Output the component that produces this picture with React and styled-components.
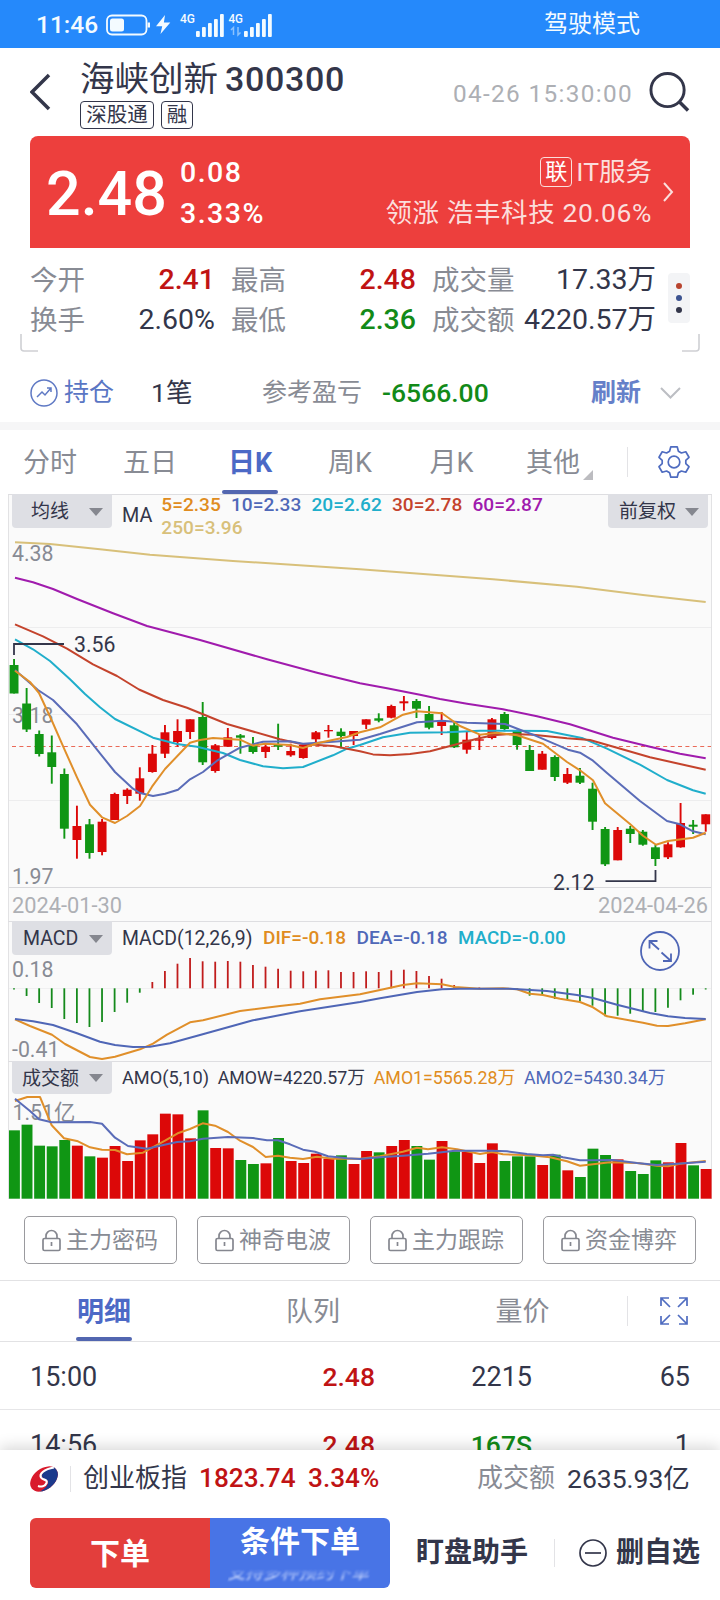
import React from "react";
import styled, { createGlobalStyle } from "styled-components";

const ink = "#33364a";
const muted = "#888b94";
const up = "#c01314";
const down = "#128a18";
const brand = "#4f68b8";
const amber = "#e08c20";
const cyan = "#20aecb";

const Global = createGlobalStyle`
  *, *::before, *::after { box-sizing: border-box; }
  body { margin: 0; background: #fff; }
  svg { display: block; }
  svg text { font-family: Roboto, "Noto Sans CJK SC", sans-serif; }
`;

const Screen = styled.div`
  width: 720px;
  height: 1600px;
  overflow: hidden;
  display: flex;
  flex-direction: column;
  background: #fff;
  color: ${ink};
  font-family: Roboto, "Noto Sans CJK SC", sans-serif;
  white-space: nowrap;
`;

const Text = styled.span`
  display: block;
  font-size: ${(p) => p.$size || 27}px;
  line-height: 1.2;
  font-weight: ${(p) => p.$weight || 400};
  color: ${(p) => p.$color || "inherit"};
  letter-spacing: ${(p) => p.$track || 0}px;
  text-align: ${(p) => p.$align || "left"};
`;

const StatusBar = styled.header`
  flex: none;
  height: 48px;
  display: grid;
  grid-template-columns: 69px 73px 366px auto;
  align-items: center;
  padding: 1px 0 0 36px;
  background: #2589fb;
  color: #f4fbff;
`;

const Header = styled.div`
  flex: none;
  height: 88px;
  display: grid;
  grid-template-columns: 50px 1fr 196px 41px;
  padding: 0 30px;
`;
const Centered = styled.div`
  display: flex;
  align-items: center;
  padding-top: ${(p) => p.$top || 0}px;
`;
const Title = styled.div`
  display: flex;
  align-items: center;
  gap: 7px;
  height: 41px;
  margin-top: 11px;
`;
const Tags = styled.div`
  display: flex;
  gap: 7px;
  margin-top: 1px;
`;
const Tag = styled.span`
  display: flex;
  align-items: center;
  justify-content: center;
  width: ${(p) => p.$w}px;
  height: 28px;
  border: 1px solid ${ink};
  border-radius: 4px;
  font-size: 20.5px;
  line-height: 1;
`;

const QuoteCard = styled.section`
  flex: none;
  height: 112px;
  margin: 0 30px;
  padding: 0 16px 0;
  border-radius: 8px 8px 0 0;
  background: #ed3f3d;
  color: #fff;
  display: grid;
  grid-template-columns: 134px 1fr auto 22px;
  align-items: center;
`;
const Price = styled(Text)`
  padding-top: 5px;
`;
const QuoteLines = styled.div`
  display: grid;
  grid-template-rows: 41px 41px;
  align-items: center;
  justify-items: ${(p) => p.$align || "start"};
  padding-top: ${(p) => p.$top}px;
`;
const Sector = styled.div`
  display: flex;
  align-items: center;
  gap: 4px;
  color: #fbdedc;
`;
const SectorTag = styled.span`
  display: flex;
  align-items: center;
  justify-content: center;
  width: 32px;
  height: 30px;
  border: 1px solid #fbdedc;
  border-radius: 4px;
  color: #fff;
  font-size: 22px;
  line-height: 1;
`;

const Stats = styled.section`
  flex: none;
  height: 103px;
  padding: 12px 30px 0;
  display: flex;
`;
const StatGrid = styled.div`
  width: 626px;
  height: 80px;
  display: grid;
  grid-template-columns: 58px 127px 16px 58px 127px 16px 84px 140px;
  grid-template-rows: 40px 40px;
  align-items: center;
`;
const StatName = styled(Text)`
  color: ${muted};
  font-size: 27.5px;
`;
const StatValue = styled(Text)`
  text-align: right;
  font-size: 28.5px;
`;
const MoreDots = styled.div`
  width: 22px;
  height: 50px;
  margin: 13px 0 0 12px;
  border-radius: 4px;
  background: #f3f4f6;
  display: flex;
  flex-direction: column;
  align-items: center;
  justify-content: center;
  gap: 6px;
`;
const Dot = styled.i`
  width: 6px;
  height: 6px;
  border-radius: 50%;
  background: ${(p) => p.$c};
`;

const BracketRow = styled.div`
  flex: none;
  height: 18px;
  margin: -17px 20px 0;
`;

const Holding = styled.section`
  flex: none;
  height: 70px;
  display: grid;
  grid-template-columns: 34px 87px 111px 120px 209px 69px 21px;
  padding: 11px 0 0 30px;
  align-items: center;
`;
const Band = styled.div`
  flex: none;
  height: 8px;
  background: #f6f6f7;
`;

const Tabs = styled.nav`
  flex: none;
  height: 64px;
  display: flex;
`;
const Tab = styled.div`
  width: ${(p) => p.$w}px;
  display: flex;
  flex-direction: column;
  align-items: center;
  justify-content: space-between;
  padding-top: ${(p) => p.$top}px;
  font-size: 27px;
  line-height: 32px;
  font-weight: ${(p) => (p.$on ? 700 : 400)};
  color: ${(p) => (p.$on ? "#4c69c6" : muted)};
  &::after {
    content: "";
    width: 56px;
    height: 4px;
    border-radius: 2px;
    background: ${(p) => (p.$on ? "#5266b0" : "transparent")};
  }
`;
const TabTail = styled.div`
  flex: 1;
  display: flex;
  align-items: center;
`;
const MoreCorner = styled.i`
  flex: none;
  margin: 26px 0 0 -20px;
  border: 5px solid transparent;
  border-right-color: #bcbcc0;
  border-bottom-color: #bcbcc0;
`;
const Rule = styled.i`
  flex: none;
  width: 1px;
  height: ${(p) => p.$h}px;
  background: #e3e3e6;
  margin: ${(p) => p.$m || 0};
`;

const Pane = styled.section`
  flex: none;
  height: ${(p) => p.$h}px;
  display: grid;
  align-items: start;
  > * { grid-area: 1 / 1; }
`;
const PaneHead = styled.div`
  display: flex;
  padding: 0 12px;
  height: ${(p) => p.$h || 34}px;
`;
const Picker = styled.div`
  flex: none;
  width: 100px;
  height: 100%;
  display: flex;
  align-items: center;
  justify-content: space-between;
  padding: 1px 9px 0 ${(p) => p.$pad}px;
  border-radius: 0 0 4px 4px;
  background: #dedfe4;
  font-size: ${(p) => p.$size || 19}px;
  line-height: 1;
`;
const Caret = styled.i`
  border: 7px solid transparent;
  border-top: 8px solid #85878f;
  border-bottom: 0;
`;
const Legend = styled.div`
  flex: 1;
  display: flex;
  column-gap: ${(p) => p.$gap}px;
  padding: ${(p) => p.$pad};
`;
const MaName = styled(Text)`
  padding-top: 10px;
`;
const MaValues = styled.div`
  flex: 1;
  display: flex;
  flex-wrap: wrap;
  align-content: flex-start;
  column-gap: 10.2px;
`;

const Tools = styled.div`
  flex: none;
  height: 81px;
  display: flex;
  gap: 20px;
  padding: 17px 24px 0;
`;
const Tool = styled.div`
  width: 153px;
  height: 48px;
  border: 1px solid #9a9a9e;
  border-radius: 5px;
  display: flex;
  align-items: center;
  gap: 5px;
  padding: 1px 0 0 17px;
  color: ${muted};
`;
const DetailTabs = styled(Tabs)`
  height: 62px;
  border-top: 1px solid #e2e2e4;
  border-bottom: 1px solid #e2e2e4;
`;
const Trades = styled.section`
  flex: none;
  height: 108px;
  overflow: hidden;
`;
const Trade = styled.div`
  height: 68px;
  display: grid;
  grid-template-columns: 150px 195px 157px 158px;
  align-items: center;
  padding: 3px 30px 0;
  border-bottom: 1px solid #e6e6e8;
`;

const Footer = styled.footer`
  flex: none;
  height: 150px;
  background: #fff;
  box-shadow: 0 -3px 14px rgba(0, 0, 0, 0.16);
  position: relative;
`;
const IndexRow = styled.div`
  height: 56px;
  display: grid;
  grid-template-columns: 40px 13px 116px 109px 169px 90px auto;
  align-items: center;
  padding: 1px 0 0 30px;
`;
const Actions = styled.div`
  display: grid;
  grid-template-columns: 180px 180px 26px 112px 27px 24px 37px auto;
  align-items: center;
  padding: 12px 0 0 30px;
  height: 82px;
`;
const Action = styled.div`
  height: 70px;
  display: flex;
  flex-direction: column;
  align-items: center;
  justify-content: ${(p) => (p.$blue ? "flex-start" : "center")};
  padding-top: ${(p) => (p.$blue ? 6 : 2)}px;
  border-radius: ${(p) => (p.$blue ? "0 6px 6px 0" : "6px 0 0 6px")};
  background: ${(p) => (p.$blue ? "#4874e6" : "#e33e3c")};
  color: #fff;
`;
const Ghost = styled.div`
  font-size: 17.7px;
  font-weight: 500;
  line-height: 20px;
  margin-top: 3px;
  color: #dfe8ff;
  opacity: 0.75;
  filter: blur(0.9px);
  transform: skewX(-14deg);
  mask-image: linear-gradient(transparent 30%, #000 70%);
`;

const STEP = 12.576;
const cx = (i) => 14 + i * STEP;

// Each candle: direction, body top, body bottom, wick top, wick bottom.
const candles = [
  ["g", 665, 693.5, 659, 693.5], ["g", 703.5, 729.5, 688, 732], ["g", 734, 754, 730.5, 756.5],
  ["g", 752.3, 767, 735.5, 783.7], ["g", 774, 828.7, 768.5, 838.7], ["r", 826, 840, 805.7, 858.7],
  ["g", 824.3, 853, 819, 858.7], ["r", 821.7, 852, 819, 855.3], ["r", 794, 820, 792.7, 820],
  ["r", 789.7, 796, 788.3, 804], ["r", 778.3, 793.7, 767.3, 800.7], ["r", 753.7, 772, 745, 772.7],
  ["r", 732.3, 753.7, 725, 758], ["r", 731, 742, 719.3, 746.7], ["r", 719.3, 732, 719.3, 739],
  ["g", 717, 762.3, 702, 765], ["r", 745.3, 771, 744, 772.7], ["r", 737.3, 746.7, 728, 746.7],
  ["g", 735.3, 737.7, 734, 753.7], ["g", 745.3, 752, 737, 753.7], ["r", 746.7, 752, 744.7, 758],
  ["g", 745, 746.7, 723.7, 750], ["r", 751, 755.3, 743.7, 756.7], ["r", 745, 758, 743.7, 758.7],
  ["r", 732.3, 739.3, 731, 743.3], ["r", 730, 731.3, 725, 737.7], ["g", 731.7, 736, 728.3, 748.3],
  ["r", 731, 736, 731, 745], ["r", 719.3, 724.7, 719.3, 729], ["g", 718.3, 720.7, 713.3, 722.3],
  ["r", 706, 717.7, 704.7, 718.3], ["r", 701.3, 703.3, 696, 710.7], ["g", 701, 708.7, 699, 718],
  ["g", 714, 727.7, 706, 729.3], ["r", 722, 726, 712, 735], ["g", 725.3, 747.3, 722.3, 748],
  ["r", 739.7, 749.7, 732, 753.7], ["r", 739.3, 740.7, 735, 750], ["r", 719.3, 738, 718, 739.3],
  ["g", 714, 729, 712, 731.3], ["g", 731, 745, 729.7, 749.7], ["g", 750, 771, 745, 771],
  ["r", 753.7, 769.7, 751, 769.7], ["g", 757, 777, 755.3, 781], ["r", 774, 782.7, 768, 784],
  ["g", 775.7, 782.7, 768, 784], ["g", 788.7, 821.7, 782.7, 830], ["g", 829, 864.3, 827, 866],
  ["r", 830, 860.3, 827, 860.3], ["g", 828.7, 834, 826, 843], ["g", 831.7, 844.7, 830, 845.7],
  ["g", 847.3, 859, 844.7, 866], ["r", 844.3, 857.3, 842.3, 859], ["r", 823, 847.3, 803, 847.7],
  ["g", 824.7, 826.7, 820, 834], ["r", 814.3, 824.3, 814.3, 831.7],
];

const averages = [
  ["#d8c07a", "15,542.3 50,544 100,549.3 150,554.7 233,561 360,569.3 493,579.3 577,586.7 643,595 705.7,602"],
  ["#a01bad", "15,577.7 33,582.3 53,589 77,599 113,613.3 147,626 200,640 267,659.3 317,672.7 360,683.3 387,688.3 420,694.7 440,699 467,703.7 503,709.3 537,716.3 570,724.3 613,737.7 650,746.7 680,753.7 705.7,758.3"],
  ["#20aecb", "15,639.3 33,649.3 50,661 70,679.3 85,694 100,707.3 115,719 153,737.7 177,744 197,746.7 223,753 240,760 263,766.3 283,768.3 303,767 333,755.3 347,748.7 360,745 383,737.3 410,732.7 447,732.3 480,730.7 547,731 583,738.3 607,748.7 640,764.7 667,780 693,790.3 705.7,793.7"],
  ["#c4432c", "15,624.3 43,636.3 67,648.7 93,664.3 117,676 139,689.5 163,700 187,707.7 227,724 280,739.3 300,743.7 333,746 360,751.3 373,754.4 390,755.3 410,754 430,751.3 453,745.3 477,738.7 493,735.3 510,734 533,734.7 567,738.3 590,740 617,747.7 650,757.3 680,764 705.7,769.7"],
  ["#5a6cb8", "15,670 38,690 53,700 77,724.3 100,753.3 115,772 133,788.7 140,793 153,796 165,793.7 178,789.7 190,779.3 203,772 217,760.7 240,747.7 263,741.7 290,741.3 303,743.7 333,741.7 360,739.7 380,734 417,722.3 442,720.7 467,722.7 505,724 533,734.7 568,749.7 580,752.7 593,760.7 607,773 640,801 667,821 680,824.3 693,831.3 705.7,834.3"],
  ["#e08f2a", "15,670.7 30,682 39,693 52,721 65,750.7 77,777.3 90,804.7 102,817.3 115,823 127,816 140,806 152,786.7 165,769 190,742.7 200,740 213,738 240,739.7 253,745.7 265,743.8 290,745 303,748 317,743.3 347,737 360,732.3 380,727.3 403,714.7 417,711.3 442,713.3 460,726 480,734.7 497,732.7 517,735.3 543,743.7 567,762 580,770.3 593,780.3 605,803.3 630,824 643,835.7 656,844.7 668,841 693,837.7 705.7,832.7"],
];

const macdEnds = [
  989.5, 996, 1003, 1008, 1019, 1023, 1027, 1022, 1012, 1002.7, 992.7, 982, 971, 963.7, 958,
  961.3, 961.7, 961, 961.7, 965, 966.7, 968.7, 970.7, 971.3, 970.7, 970.3, 972, 972, 971.3, 972,
  970.3, 969.7, 971, 976, 978.7, 985, 987.5, 987.5, 988, 988, 989.3, 995.7, 995, 999, 999.7, 1001,
  1005.7, 1016.3, 1015.7, 1013.7, 1012, 1012, 1007.7, 1000.3, 994.7, 989.5,
];
const dif = "15,1019.3 30,1026 52,1034.7 65,1044 90,1057 102,1059 115,1056.7 140,1049.3 153,1043.7 167,1034.7 190,1022.3 203,1020.3 240,1011 280,1006 300,1003.7 320,999.3 360,994.3 380,990 403,985 417,983.3 442,984.3 455,987 480,988.7 503,988.3 517,989.3 530,993.7 543,995 560,998.7 580,1002 593,1007.3 607,1016.3 643,1022.7 657,1025.7 668,1026 685,1023.3 705.7,1019.3";
const dea = "15,1019 33,1021.3 53,1025 77,1033.3 100,1041.7 115,1045 133,1047 150,1046.7 170,1043.3 200,1035 253,1020.3 300,1011.3 360,1002 380,998.3 417,992 442,989.3 460,988.7 510,988.7 547,991 577,995 593,998 617,1004.7 650,1013 668,1016.3 685,1018 705.7,1019";

const volume = "g631 g614 g677 g679 g660 r677 g709 r713 r678 r723 r661 r643 r581 r583 r655 g571 r684 r685 g720 g732 r730 g654 r723 r729 r701 r716 g706 r732 r693 g697 r678 r660 g678 g719 r663 g694 r696 r729 r670 g723 g709 g709 r735 g704 r751 g771 g686 g705 r718 g753 g762 g721 r727 r669 g736 r747"
  .split(" ")
  .map((v) => [v[0], 920 + Number(v.slice(1)) / 3]);
const amo1 = "15,1101 27.3,1097 40,1097 51.7,1125.3 64,1138.3 78,1141.3 90,1147.3 102,1149.7 115,1150 127,1154.3 143,1152.7 165,1140.7 177.7,1133.3 190,1129 202.7,1123.3 215,1125.7 228,1132 240,1140.7 253,1147 265.7,1157 278,1155.7 290,1157.7 303,1159 317,1156.7 333,1158.7 360,1158.7 380,1156.3 403,1151.7 417,1147.7 428,1149.3 442,1147.3 457,1149.3 480,1154 492,1152 503,1154.3 530,1155.3 550,1157.3 567,1161.3 580,1165.7 593,1164.3 610,1162.3 637,1163 657,1165.7 668,1166.3 680,1163.7 705.7,1161";
const amo2 = "15,1098.7 30,1111 39,1119.3 51.7,1122.3 90,1122 102,1123.7 115,1137.7 128,1146 147,1148.7 160,1145.7 177,1142 190,1141.3 203,1138.7 228,1137 253,1138 267,1140.3 278,1140.3 290,1144.3 303,1149.7 315,1151.7 328,1156.3 347,1158.3 360,1159 380,1157.3 403,1155.7 428,1153.7 455,1150.7 492,1150.7 507,1151.3 527,1154 543,1155.3 553,1154.7 563,1157.3 580,1160.3 593,1160.3 613,1160 637,1163 657,1165 677,1163.7 705.7,1161.7";

const fill = (d) => (d === "g" ? "#109614" : "#dc0808");

const Frame = ({ top, bottom }) => (
  <g>
    <rect x="8" y={top} width="704" height={bottom - top} fill="#fafafa" />
    <path d={`M8.5 ${top}V${bottom}M711.5 ${top}V${bottom}`} stroke="#e2e2e4" />
    <path d={`M8 ${top + 0.5}H712`} stroke="#dedee1" />
  </g>
);
const Curve = ({ color, points }) => (
  <polyline points={points} fill="none" stroke={color} strokeWidth="2" strokeLinejoin="round" />
);
const Mark = ({ x, y, color = muted, anchor, children, size = 21.3 }) => (
  <text x={x} y={y} fill={color} fontSize={size} textAnchor={anchor}>{children}</text>
);

const KLineChart = () => (
  <svg width="720" height="427" viewBox="0 494 720 427">
    <Frame top={494} bottom={921} />
    <path d="M9 627.5H711M9 714.5H711M9 800.5H711" stroke="#ededee" />
    <path d="M9 887.5H711" stroke="#d9d9dc" />
    <path d="M12 746.5H711" stroke="#ea6a58" strokeWidth="1.2" strokeDasharray="4 3.4" />
    <Mark x="12" y="561">4.38</Mark>
    <Mark x="12" y="722.5">3.18</Mark>
    <Mark x="12" y="883.5">1.97</Mark>
    <Mark x="12" y="912.5" size={21.8} color="#aeb0b5">2024-01-30</Mark>
    <Mark x="708" y="912.5" size={21.8} color="#aeb0b5" anchor="end">2024-04-26</Mark>
    {candles.map(([d, a, b, t, u], i) => (
      <g key={i} fill={fill(d)}>
        <rect x={cx(i) - 0.9} y={t} width="1.9" height={u - t} />
        <rect x={cx(i) - 4.4} y={a} width="8.9" height={b - a} />
      </g>
    ))}
    {averages.map(([c, p]) => <Curve key={c} color={c} points={p} />)}
    <path d="M14 655V644H64M605.5 881.2H655.5V870" fill="none" stroke={ink} strokeWidth="1.8" />
    <Mark x="74" y="652" color={ink}>3.56</Mark>
    <Mark x="553" y="889.5" color={ink}>2.12</Mark>
  </svg>
);

const MacdChart = () => (
  <svg width="720" height="140" viewBox="0 921 720 140">
    <Frame top={921} bottom={1061} />
    <path d="M9 988.5H711" stroke="#f0f0f1" />
    <Mark x="12" y="976.5">0.18</Mark>
    <Mark x="12" y="1056.5">-0.41</Mark>
    {macdEnds.map((y, i) => (
      <path key={i} d={`M${cx(i)} 988.3V${y}`} stroke={y < 988 ? "#c01c1c" : "#158a1c"} strokeWidth="1.8" />
    ))}
    <Curve color="#e08f2a" points={dif} />
    <Curve color="#4f66b6" points={dea} />
    <g fill="none" stroke="#4f66b6" strokeWidth="1.8">
      <circle cx="660" cy="951" r="19" />
      <path d="M659 949.5L649.5 941M649.5 948.5V941H657.5M661.5 952.5L671 961M671 953.5V961H663" />
    </g>
  </svg>
);

const AmountChart = () => (
  <svg width="720" height="138" viewBox="0 1061 720 138">
    <Frame top={1061} bottom={1199} />
    {volume.map(([d, y], i) => (
      <rect key={i} x={cx(i) - 5} y={y} width="10.9" height={1198.7 - y} fill={fill(d)} />
    ))}
    <Mark x="12.5" y="1119.5">1.51亿</Mark>
    <Curve color="#e08f2a" points={amo1} />
    <Curve color="#5a6cb8" points={amo2} />
  </svg>
);

const SignalGlyph = () => (
  <svg width="98" height="28" viewBox="178 10 98 28" fill="#f4fbff">
    <text x="180" y="21.5" fontSize="12" fontWeight="500" textLength="15" lengthAdjust="spacingAndGlyphs">4G</text>
    <text x="228.5" y="21.5" fontSize="12" fontWeight="500" textLength="14.5" lengthAdjust="spacingAndGlyphs">4G</text>
    {[0, 48].map((dx) =>
      [30, 26, 22, 18, 13].map((y, i) => (
        <rect key={dx + y} x={196 + dx + i * 6} y={y} width="3.8" height={36 - y} rx="1" />
      ))
    )}
    <path d="M231 29l2.5-2.5V34M238 26v8l2.5-2.5" stroke="#8cc2fd" strokeWidth="1.5" fill="none" />
  </svg>
);
const PowerGlyph = () => (
  <svg width="67" height="24" viewBox="105 12 67 24" fill="none" stroke="#f4fbff" strokeWidth="1.8">
    <rect x="107" y="14.5" width="39.5" height="19" rx="5" />
    <path d="M148.8 21.5v5" strokeWidth="2.4" />
    <rect x="110" y="17.5" width="14" height="13" rx="2.5" fill="#f4fbff" stroke="none" />
    <path d="M165 14l-9 11.2h6.2L160.5 33l9.8-11.6h-6.4z" fill="#f4fbff" stroke="none" />
  </svg>
);
const Gear = () => (
  <svg width="34" height="34" viewBox="0 0 34 34" fill="none" stroke="#4f6cc0" strokeWidth="1.7" strokeLinejoin="round">
    <circle cx="17" cy="17" r="5.8" />
    <path d="M13.8 1.8h6.4l1.2 4.4 3 1.8 4.4-1.2 3.2 5.5-3.2 3.1v3.2l3.2 3.1-3.2 5.5-4.4-1.2-3 1.8-1.2 4.4h-6.4l-1.2-4.4-3-1.8-4.4 1.2L2 21.7l3.2-3.1v-3.2L2 12.3l3.2-5.5L9.6 8l3-1.8z" />
  </svg>
);
const Lock = () => (
  <svg width="19" height="23" viewBox="0 0 19 23" fill="none" stroke="#85878f" strokeWidth="1.7">
    <rect x="1" y="9.5" width="17" height="12" rx="1.5" />
    <path d="M4 9.5V7a5.5 5.5 0 0 1 11 0v2.5M9.5 13v4" />
  </svg>
);
const Arrows = () => (
  <svg width="28" height="28" viewBox="0 0 28 28" fill="none" stroke="#4f6cc0" strokeWidth="1.7">
    <path d="M1 9V1h8M1 1l9 9M19 1h8v8M27 1l-9 9M1 19v8h8M1 27l9-9M27 19v8h-8M27 27l-9-9" />
  </svg>
);
const Brackets = () => (
  <svg width="680" height="18" viewBox="0 0 680 18" fill="none" stroke="#cfd0d4" strokeWidth="1.6">
    <path d="M1 0V14Q1 17 4 17H18M679 0V14Q679 17 676 17H662" />
  </svg>
);
const BrandMark = () => (
  <svg width="28" height="26" viewBox="0 0 28 26">
    <clipPath id="oval"><ellipse cx="14" cy="13" rx="15.5" ry="10.5" transform="rotate(-38 14 13)" /></clipPath>
    <g clipPath="url(#oval)">
      <rect width="28" height="26" fill="#d91a2c" />
      <path d="M28 1H22C14 3 11 8 12 11C14 14 19 13 18 17C17 21 14 23 9 26H28z" fill="#1c3a8c" />
      <path d="M24 1.5C14 3 9 8 11 11.5C13 14.5 18 13 16.5 17C15 20.5 11 21 8 20" fill="none" stroke="#fff" strokeWidth="2.2" />
    </g>
  </svg>
);

export default function App() {
  return (
    <Screen>
      <Global />
      <StatusBar>
        <Text $size={24.5} $weight={500}>11:46</Text>
        <PowerGlyph />
        <SignalGlyph />
        <Text $size={24}>驾驶模式</Text>
      </StatusBar>

      <Header>
        <Centered>
          <svg width="22" height="38" viewBox="0 0 22 38" fill="none" stroke={ink} strokeWidth="3.5">
            <path d="M19 2L2 19L19 36" />
          </svg>
        </Centered>
        <div>
          <Title>
            <Text $size={34.5}>海峡创新</Text>
            <Text $size={34} $weight={500} $track={0.7}>300300</Text>
          </Title>
          <Tags><Tag $w={74}>深股通</Tag><Tag $w={32}>融</Tag></Tags>
        </div>
        <Centered $top={3}><Text $size={24.3} $color="#adafb4" $track={1.35}>04-26 15:30:00</Text></Centered>
        <Centered>
          <svg width="42" height="42" viewBox="0 0 42 42" fill="none" stroke={ink} strokeWidth="3">
            <circle cx="19" cy="19" r="17" />
            <path d="M31 31L40 40" strokeWidth="3.5" />
          </svg>
        </Centered>
      </Header>

      <QuoteCard>
        <Price $size={61} $weight={500}>2.48</Price>
        <QuoteLines $top={4}>
          <Text $size={28.5} $weight={500} $track={1.5}>0.08</Text>
          <Text $size={28.5} $weight={500} $track={1.5}>3.33%</Text>
        </QuoteLines>
        <QuoteLines $align="end" $top={1}>
          <Sector><SectorTag>联</SectorTag><Text $size={26.5}>IT服务</Text></Sector>
          <Text $size={26.5} $color="#fbdedc" $track={0.6}>领涨 浩丰科技 20.06%</Text>
        </QuoteLines>
        <svg width="22" height="22" viewBox="0 0 22 22" fill="none" stroke="#fbdedc" strokeWidth="2">
          <path d="M12 2l8 9-8 9" />
        </svg>
      </QuoteCard>

      <Stats>
        <StatGrid>
          <StatName>今开</StatName><StatValue $weight={500} $color={up}>2.41</StatValue><i />
          <StatName>最高</StatName><StatValue $weight={500} $color={up}>2.48</StatValue><i />
          <StatName>成交量</StatName><StatValue>17.33万</StatValue>
          <StatName>换手</StatName><StatValue>2.60%</StatValue><i />
          <StatName>最低</StatName><StatValue $weight={500} $color={down}>2.36</StatValue><i />
          <StatName>成交额</StatName><StatValue>4220.57万</StatValue>
        </StatGrid>
        <MoreDots><Dot $c="#b8442f" /><Dot $c="#3c5390" /><Dot $c={ink} /></MoreDots>
      </Stats>
      <BracketRow><Brackets /></BracketRow>

      <Holding>
        <svg width="28" height="28" viewBox="0 0 28 28" fill="none" stroke="#5f79c4" strokeWidth="1.5">
          <circle cx="14" cy="14" r="13" />
          <path d="M7 18l5-5 3 3 6-7M17 9h4v4" />
        </svg>
        <Text $size={25} $color="#5a76c4">持仓</Text>
        <Text $size={26.5}>1笔</Text>
        <Text $size={25} $color={muted}>参考盈亏</Text>
        <Text $size={26.5} $weight={500} $color={down}>-6566.00</Text>
        <Text $size={25} $weight={700} $color="#6580c9">刷新</Text>
        <svg width="21" height="12" viewBox="0 0 21 12" fill="none" stroke="#bcbec3" strokeWidth="2">
          <path d="M1 1l9.5 9.5L20 1" />
        </svg>
      </Holding>
      <Band />

      <Tabs>
        <Tab $w={100} $top={17}>分时</Tab>
        <Tab $w={100} $top={17}>五日</Tab>
        <Tab $w={100} $top={17} $on>日K</Tab>
        <Tab $w={100} $top={17}>周K</Tab>
        <Tab $w={103} $top={17}>月K</Tab>
        <Tab $w={100} $top={17}>其他</Tab>
        <TabTail>
          <MoreCorner />
          <Rule $h={30} $m="0 29px 0 34px" />
          <Gear />
        </TabTail>
      </Tabs>

      <Pane $h={427}>
        <KLineChart />
        <PaneHead>
          <Picker $pad={19}>均线<Caret /></Picker>
          <Legend $gap={9} $pad="0 40px 0 10px">
            <MaName $size={19.8}>MA</MaName>
            <MaValues>
              <Text $size={19.1} $weight={500} $color={amber}>5=2.35</Text>
              <Text $size={19.1} $weight={500} $color={brand}>10=2.33</Text>
              <Text $size={19.1} $weight={500} $color={cyan}>20=2.62</Text>
              <Text $size={19.1} $weight={500} $color="#c4432c">30=2.78</Text>
              <Text $size={19.1} $weight={500} $color="#a01bad">60=2.87</Text>
              <Text $size={19.1} $weight={500} $color="#d8c07a">250=3.96</Text>
            </MaValues>
          </Legend>
          <Picker $pad={11}>前复权<Caret /></Picker>
        </PaneHead>
      </Pane>

      <Pane $h={140}>
        <MacdChart />
        <PaneHead>
          <Picker $pad={11} $size={19.5}>MACD<Caret /></Picker>
          <Legend $gap={10.5} $pad="6px 0 0 10px">
            <Text $size={19.4}>MACD(12,26,9)</Text>
            <Text $size={19} $weight={500} $color={amber}>DIF=-0.18</Text>
            <Text $size={19.1} $weight={500} $color={brand}>DEA=-0.18</Text>
            <Text $size={18.8} $weight={500} $color={cyan}>MACD=-0.00</Text>
          </Legend>
        </PaneHead>
      </Pane>

      <Pane $h={138}>
        <AmountChart />
        <PaneHead $h={33}>
          <Picker $pad={10}>成交额<Caret /></Picker>
          <Legend $gap={8.7} $pad="6px 0 0 10px">
            <Text $size={18.2}>AMO(5,10)</Text>
            <Text $size={17.8}>AMOW=4220.57万</Text>
            <Text $size={17.8} $color={amber}>AMO1=5565.28万</Text>
            <Text $size={17.8} $color={brand}>AMO2=5430.34万</Text>
          </Legend>
        </PaneHead>
      </Pane>

      <Tools>
        {["主力密码", "神奇电波", "主力跟踪", "资金博弈"].map((name) => (
          <Tool key={name}><Lock /><Text $size={23}>{name}</Text></Tool>
        ))}
      </Tools>

      <DetailTabs>
        <Tab $w={208} $top={15} $on>明细</Tab>
        <Tab $w={210} $top={15}>队列</Tab>
        <Tab $w={209} $top={15}>量价</Tab>
        <TabTail>
          <Rule $h={30} $m="0 32px 0 0" />
          <Arrows />
        </TabTail>
      </DetailTabs>

      <Trades>
        <Trade>
          <Text>15:00</Text>
          <Text $size={26.5} $weight={500} $color={up} $align="right">2.48</Text>
          <Text $align="right">2215</Text>
          <Text $align="right">65</Text>
        </Trade>
        <Trade>
          <Text>14:56</Text>
          <Text $size={26.5} $weight={500} $color={up} $align="right">2.48</Text>
          <Text $size={26.5} $weight={500} $color={down} $align="right">167S</Text>
          <Text $align="right">1</Text>
        </Trade>
      </Trades>

      <Footer>
        <IndexRow>
          <BrandMark />
          <Rule $h={26} />
          <Text $size={26}>创业板指</Text>
          <Text $size={26.2} $weight={500} $color={up}>1823.74</Text>
          <Text $size={26.2} $weight={500} $color={up}>3.34%</Text>
          <Text $size={26} $color={muted}>成交额</Text>
          <Text $size={26.5}>2635.93亿</Text>
        </IndexRow>
        <Actions>
          <Action><Text $size={30} $weight={700}>下单</Text></Action>
          <Action $blue>
            <Text $size={30} $weight={700}>条件下单</Text>
            <Ghost>支持多种预约下单</Ghost>
          </Action>
          <i />
          <Text $size={28} $weight={700}>盯盘助手</Text>
          <Rule $h={28} $m="0 0 0 26px" />
          <i />
          <svg width="28" height="28" viewBox="0 0 28 28" fill="none" stroke={ink} strokeWidth="1.7">
            <circle cx="14" cy="14" r="13" />
            <path d="M6 14h16" />
          </svg>
          <Text $size={28} $weight={700}>删自选</Text>
        </Actions>
      </Footer>
    </Screen>
  );
}
